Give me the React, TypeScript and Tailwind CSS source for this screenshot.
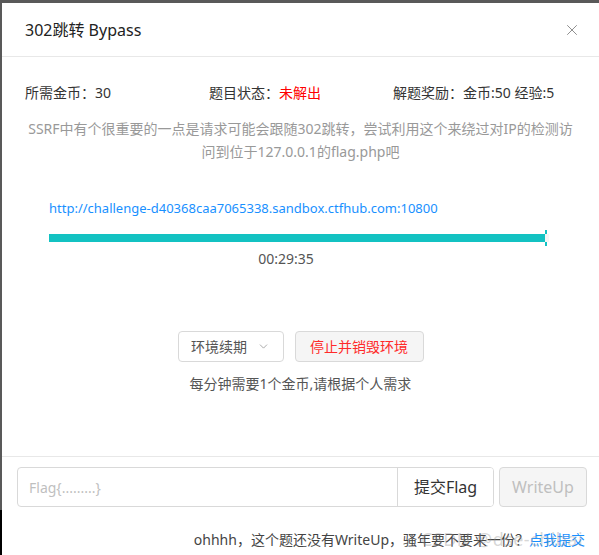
import { ChevronDown, X } from "lucide-react"

const font = {
  fontFamily: '"Noto Sans", "Noto Sans CJK SC", sans-serif',
}

const InfoRow = () => (
  <div className="flex text-[14px] text-[#333] pt-[25px] pl-[23px]">
    <div className="w-[184px]">所需金币：30</div>
    <div className="w-[184px]">
      题目状态：<span className="text-[#ff0000]">未解出</span>
    </div>
    <div>解题奖励：金币:50 经验:5</div>
  </div>
)

export default function App() {
  return (
    <div className="w-[599px] h-[555px] overflow-hidden bg-[#595959] flex" style={font}>
      {/* left strip of the backdrop */}
      <div className="w-[2px] flex flex-col shrink-0">
        <div className="h-[510px] bg-[#595959]" />
        <div className="flex-1 bg-black" />
      </div>

      <div className="flex-1 mt-[3px] bg-white flex flex-col">
        {/* header */}
        <div className="h-[54px] flex items-center justify-between pl-[23px] pr-[18px] border-b border-[#e8e8e8]">
          <h3 className="text-[16px] text-[#222]">302跳转 Bypass</h3>
          <X size={18} strokeWidth={1.3} className="text-[#8c8c8c]" />
        </div>

        {/* body */}
        <div className="h-[400px] border-b border-[#e8e8e8] flex flex-col">
          <InfoRow />

          <p className="mt-[14px] text-center text-[14px] leading-[23px] text-[#999]">
            SSRF中有个很重要的一点是请求可能会跟随302跳转，尝试利用这个来绕过对IP的检测访
            <br />
            问到位于127.0.0.1的flag.php吧
          </p>

          <div className="pl-[47px] pr-[50px] mt-[32px]">
            <a className="text-[13px] text-[#1890ff] leading-[20px]">
              http://challenge-d40368caa7065338.sandbox.ctfhub.com:10800
            </a>

            <div className="relative mt-[15px] h-[8px] bg-[#f5f5f5]">
              <div className="h-full bg-[#13c2c2] w-[496px]" />
              <div className="absolute left-[496px] top-[-4px] w-[2px] h-[4px] bg-[#13c2c2]" />
              <div className="absolute left-[496px] bottom-[-4px] w-[2px] h-[4px] bg-[#13c2c2]" />
            </div>

            <div className="text-center text-[14px] text-[#555] mt-[6px] pr-[26px]">
              00:29:35
            </div>
          </div>

          <div className="flex justify-center gap-[11px] mt-[62px]">
            <button className="h-[31px] w-[106px] rounded-[4px] border border-[#d9d9d9] bg-white text-[14px] text-[#555] flex items-center justify-center gap-[10px]">
              环境续期
              <ChevronDown size={13} strokeWidth={1.3} className="text-[#888]" />
            </button>
            <button className="h-[31px] w-[129px] rounded-[4px] border border-[#d9d9d9] bg-[#f5f5f5] text-[14px] text-[#ff2a2a]">
              停止并销毁环境
            </button>
          </div>

          <div className="text-center text-[14px] text-[#555] mt-[11px]">
            每分钟需要1个金币,请根据个人需求
          </div>
        </div>

        {/* footer */}
        <div className="flex pl-[15px] pr-[12px] mt-[10px] gap-[5px]">
          <div className="flex flex-1 h-[40px] border border-[#d9d9d9] rounded-[4px] overflow-hidden">
            <input
              placeholder="Flag{.........}"
              className="flex-1 px-[11px] text-[14px] placeholder:text-[#bfbfbf] outline-none"
            />
            <button className="w-[96px] border-l border-[#d9d9d9] text-[16px] text-[#333] bg-white">
              提交Flag
            </button>
          </div>
          <button className="w-[88px] h-[40px] rounded-[4px] border border-[#d9d9d9] bg-[#f5f5f5] text-[16px] text-[#bfbfbf]">
            WriteUp
          </button>
        </div>

        <div className="relative flex justify-end pr-[14px] mt-[22px] text-[14px] text-[#444]">
          <span>
            ohhhh，这个题还没有WriteUp，骚年要不要来一份？
            <span className="text-[#1890ff]">点我提交</span>
          </span>
          <span className="absolute right-[16px] top-[-3px] text-[18px] text-[#999]/40 tracking-wide">
            CSDN @dse-chibai
          </span>
        </div>
      </div>
    </div>
  )
}
